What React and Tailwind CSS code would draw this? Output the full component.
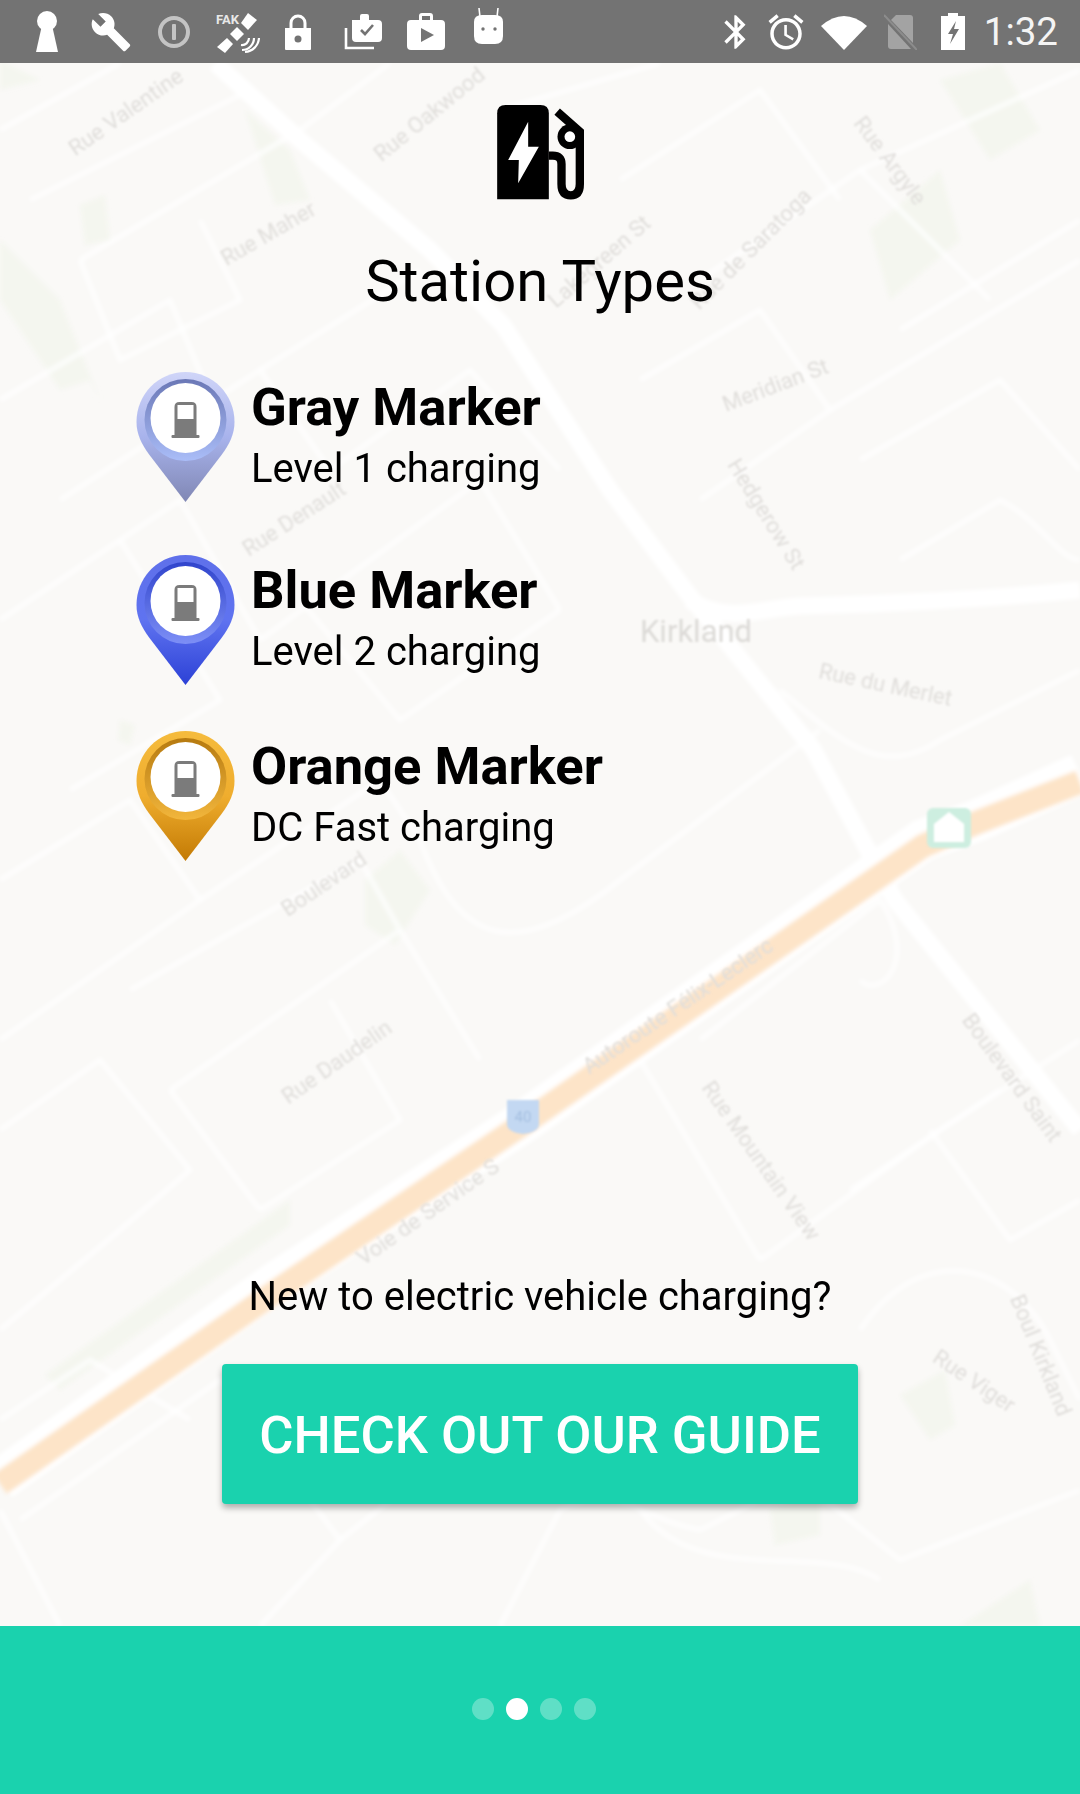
import React from 'react';

const roads = [
  'M215 63 L300 140 L430 250 L503 325 L610 490 L689 595 L813 749 L895 900 L1080 1130',
  'M689 600 C730 625 760 608 800 606 C880 604 980 600 1080 590',
];

const streets = [
  'M0 130 L120 63', 'M30 200 L250 90 L330 170', 'M80 260 L300 130 L390 63', 'M80 260 L120 360 L240 300 L200 220',
  'M0 400 L170 300 L220 420', 'M60 500 L260 370 L330 470', 'M260 370 L420 270', 'M0 620 L180 500 L260 640',
  'M120 540 L220 700 L70 790', 'M260 640 L480 480 L560 610', 'M330 470 L470 370 L560 470', 'M560 610 L400 720 L300 600',
  'M500 110 L660 63', 'M620 180 L760 90 L840 200', 'M700 280 L860 170 L990 300', 'M640 380 L760 310 L830 410 L700 500',
  'M860 170 L1080 70', 'M900 330 L1080 220', 'M830 410 L1080 260', 'M860 460 L1000 380 L1080 470', 'M900 560 L1000 500 C1040 520 1060 560 1080 560',
  'M780 690 C840 740 880 780 940 740 L1080 670', 'M0 880 L130 800 L200 900 L0 1040', 'M200 900 L380 780 L420 840', 'M130 990 L360 860 L400 930 L170 1090',
  'M0 1130 L100 1060 L190 1170 L120 1230 L0 1330', 'M170 1090 L260 1210', 'M260 1210 L400 1120 L330 1000',
  'M420 840 C460 950 520 960 620 880 L820 730', 'M400 930 L480 1060', 'M640 1060 L760 1260', 'M700 1040 L880 900 C920 960 880 1000 860 980',
  'M760 1260 L940 1130 L1080 1040', 'M850 1190 L1000 1090', 'M930 1130 L1010 1240 L1080 1200', 'M860 1330 C920 1240 1010 1260 1050 1340 L1080 1400',
  'M0 1510 L60 1626', 'M20 1520 L220 1380 L340 1540 L260 1626', 'M340 1540 L480 1430', 'M500 1626 L560 1510 C620 1480 640 1520 700 1530 L800 1480',
  'M800 1480 L900 1560 L1080 1490', 'M640 1510 C700 1590 820 1540 880 1580', 'M0 1420 L90 1360 L190 1420',
];

const greens = [
  'M0 240 L60 300 L100 400 L90 380 L60 390 L0 300 Z',
  'M0 60 L0 90 L40 80 Z',
  'M80 205 L105 195 L110 240 L85 245 Z',
  'M245 110 L290 150 L310 200 L275 205 Z',
  'M870 230 L940 170 L960 240 L890 300 Z',
  'M940 80 L1000 63 L1040 130 L990 160 Z',
  'M365 880 L400 850 L430 890 L395 945 L365 925 Z',
  'M45 1375 L290 1200 L290 1225 L60 1390 Z',
  'M770 1510 L820 1490 L820 1535 L775 1545 Z',
  'M900 1395 L945 1370 L955 1425 L930 1440 Z',
  'M960 1626 L1030 1580 L1040 1626 Z',
  'M120 720 L135 725 L130 745 L118 740 Z',
];

const labels = [
  ['Rue Valentine', 130, 118, -35, 22],
  ['Rue Oakwood', 434, 120, -39, 22],
  ['Rue Maher', 272, 240, -30, 22],
  ['Rue Argyle', 884, 165, 53, 22],
  ['Rue de Saratoga', 756, 254, -45, 22],
  ['Lakegreen St', 604, 267, -41, 22],
  ['Meridian St', 778, 392, -21, 22],
  ['Hedgerow St', 760, 518, 58, 22],
  ['Rue Denault', 298, 525, -33, 22],
  ['Rue du Merlet', 884, 692, 12, 22],
  ['Boulevard', 328, 890, -34, 22],
  ['Rue Daudelin', 341, 1068, -35, 22],
  ['Autoroute Félix-Leclerc', 682, 1012, -34, 22],
  ['Voie de Service S', 432, 1218, -35, 22],
  ['Rue Mountain View', 755, 1165, 55, 22],
  ['Boulevard Saint', 1006, 1082, 54, 22],
  ['Rue Viger', 970, 1387, 34, 22],
  ['Boul Kirkland', 1034, 1358, 68, 22],
];

const MapBackground = () => (
  <svg className="absolute inset-0 w-full h-full" viewBox="0 63 1080 1563" preserveAspectRatio="none">
    <defs>
      <filter id="mapBlur"><feGaussianBlur stdDeviation="2.2" /></filter>
      <filter id="labelBlur"><feGaussianBlur stdDeviation="1.3" /></filter>
    </defs>
    <g filter="url(#mapBlur)">
      {greens.map((d) => <path key={d} d={d} fill="#f4f6ef" />)}
      {streets.map((d) => <path key={d} d={d} fill="none" stroke="#ffffff" strokeWidth="5" opacity="0.75" />)}
      {roads.map((d) => <path key={d} d={d} fill="none" stroke="#ffffff" strokeWidth="17" />)}
      <path d="M1080 774 L978 820 L923 840 L523 1122 L275 1283 L0 1480" fill="none" stroke="#ffffff" strokeWidth="42" />
      <path d="M1080 782 L978 822 L923 846 L523 1124 L275 1292 L0 1484" fill="none" stroke="#fde4c8" strokeWidth="24" />
    </g>
    <g filter="url(#labelBlur)">
      {labels.map(([t, x, y, r, s]) => (
        <text key={t} x={x} y={y} transform={`rotate(${r} ${x} ${y})`} textAnchor="middle" fontSize={s} fontFamily="Roboto, sans-serif" fill="#e0dedb">{t}</text>
      ))}
      <text x="696" y="642" textAnchor="middle" fontSize="31" fontFamily="Roboto, sans-serif" fill="#dcdad7">Kirkland</text>
      <path d="M507 1100 H539 V1124 Q539 1132 523 1134 Q507 1132 507 1124 Z" fill="#c3d8f2" />
      <text x="523" y="1122" textAnchor="middle" fontSize="15" fontFamily="Roboto, sans-serif" fill="#a4bfe0">40</text>
      <rect x="927" y="808" width="44" height="40" rx="6" fill="#cdeee0" />
      <path d="M949 812 L964 824 V842 H934 V824 Z" fill="#ffffff" />
    </g>
  </svg>
);

const markerColors = {
  gray: { top: '#d0d5f8', mid: '#a8b3ec', tip: '#8087b4', ringTop: '#6b78b6', ringBottom: '#aabdf8' },
  blue: { top: '#5f70ea', mid: '#5f73f0', tip: '#2c41d6', ringTop: '#3044cc', ringBottom: '#7d8ff6' },
  orange: { top: '#f5bb3d', mid: '#efad2e', tip: '#c37a04', ringTop: '#b67a10', ringBottom: '#f2b63c' },
};

const Marker = ({ type }) => {
  const c = markerColors[type];
  return (
    <svg className="w-[99px] h-[130px] shrink-0" viewBox="0 0 98 130">
      <defs>
        <linearGradient id={`outer-${type}`} x1="0" y1="0" x2="0" y2="1">
          <stop offset="0" stopColor={c.top} />
          <stop offset="0.5" stopColor={c.mid} />
          <stop offset="1" stopColor={c.tip} />
        </linearGradient>
        <linearGradient id={`ring-${type}`} x1="0" y1="0" x2="0" y2="1">
          <stop offset="0" stopColor={c.ringTop} />
          <stop offset="1" stopColor={c.ringBottom} />
        </linearGradient>
      </defs>
      <path d="M49 0 C76 0 98 22 98 50 C98 62 93 72 85 83 L49 130 L13 83 C5 72 0 62 0 50 C0 22 22 0 49 0 Z" fill={`url(#outer-${type})`} />
      <circle cx="49" cy="48" r="41" fill={`url(#ring-${type})`} />
      <circle cx="49" cy="46" r="35" fill="#ffffff" />
      <path d="M38 35 Q38 30 43 30 H55 Q60 30 60 35 V64 H38 Z" fill="#7b7b7b" />
      <rect x="41" y="33" width="16" height="14" fill="#ffffff" />
      <rect x="35" y="63" width="28" height="3" rx="1" fill="#7b7b7b" />
    </svg>
  );
};

const StatusBar = () => (
  <div className="h-[63px] bg-[#737373] flex items-center shrink-0 relative text-white">
    <svg className="w-[22px] h-[41px] ml-[36px]" viewBox="0 0 22 41" fill="#fff"><circle cx="11" cy="10" r="10" /><path d="M6 14 H16 L22 41 H0 Z" /></svg>
    <svg className="w-[42px] h-[42px] ml-[32px]" viewBox="0 0 24 24" fill="#fff"><path d="M22.7 19l-9.1-9.1c.9-2.3.4-5-1.5-6.9-2-2-5-2.4-7.4-1.3L9 6 6 9 1.6 4.7C.4 7.1.9 10.1 2.9 12.1c1.9 1.9 4.6 2.4 6.9 1.5l9.1 9.1c.4.4 1 .4 1.4 0l2.3-2.3c.5-.4.5-1.1.1-1.4z" /></svg>
    <svg className="w-[32px] h-[32px] ml-[26px]" viewBox="0 0 32 32" fill="none"><circle cx="16" cy="16" r="14" stroke="#c4c4c4" strokeWidth="4" /><rect x="14" y="8" width="4" height="16" rx="1" fill="#c4c4c4" /></svg>
    <svg className="w-[46px] h-[44px] ml-[24px]" viewBox="0 0 46 44" fill="#fff">
      <text x="2" y="14" fontSize="13" fontWeight="700" fontFamily="Roboto, sans-serif" fill="#e8e8e8">FAK</text>
      <path d="M34 3 L43 10 L34 20 L27 13 Z" />
      <path d="M23 17 L30 24 L23 31 L16 24 Z" />
      <path d="M13 28 L19 34 L11 43 L3 37 Z" />
      <path d="M28 40 A 12 12 0 0 0 40 28 M31 42 A 15 15 0 0 0 45 28 M27 35 A 7 7 0 0 0 35 28" fill="none" stroke="#fff" strokeWidth="2.2" />
    </svg>
    <svg className="w-[26px] h-[36px] ml-[25px]" viewBox="0 0 26 36" fill="#fff"><path d="M6 15 V9 A7 7 0 0 1 20 9 V15" fill="none" stroke="#fff" strokeWidth="3" /><path d="M0 14 H26 V35 Q26 36 25 36 H1 Q0 36 0 35 Z" /><circle cx="13" cy="25" r="3.5" fill="#737373" /></svg>
    <svg className="w-[38px] h-[36px] ml-[33px]" viewBox="0 0 38 36" fill="#fff">
      <path d="M2 14 V34 H30" fill="none" stroke="#fff" strokeWidth="2.6" />
      <path d="M8 6 H16 V2 Q16 0 18 0 H23 Q25 0 25 2 V6 H34 Q38 6 38 10 V24 Q38 28 34 28 H12 Q8 28 8 24 Z" />
      <path d="M17 16 L21 20 L29 11" fill="none" stroke="#737373" strokeWidth="2.6" />
    </svg>
    <svg className="w-[38px] h-[37px] ml-[25px]" viewBox="0 0 38 37" fill="#fff">
      <path d="M4 7 H12 V3 Q12 0 15 0 H23 Q26 0 26 3 V7 H34 Q38 7 38 11 V33 Q38 37 34 37 H4 Q0 37 0 33 V11 Q0 7 4 7 Z M15 3 V7 H23 V3 Z" fillRule="evenodd" />
      <path d="M14 15 L27 22 L14 29 Z" fill="#737373" />
    </svg>
    <svg className="w-[29px] h-[37px] ml-[29px] -mt-[12px]" viewBox="0 0 29 37" fill="#fff">
      <path d="M6 10 L5 1 M23 10 L24 1" stroke="#fff" strokeWidth="1.6" />
      <path d="M8 8 H21 Q29 8 29 15 V29 Q29 37 21 37 H8 Q0 37 0 29 V15 Q0 8 8 8 Z" />
      <circle cx="9" cy="22" r="1.7" fill="#737373" /><circle cx="21" cy="22" r="1.7" fill="#737373" />
    </svg>

    <div className="ml-auto flex items-center">
      <svg className="w-[40px] h-[40px]" viewBox="0 0 24 24" fill="#fff"><path d="M17.71 7.71L12 2h-1v7.59L6.41 5 5 6.41 10.59 12 5 17.59 6.41 19 11 14.41V22h1l5.71-5.71-4.3-4.29 4.3-4.29zM13 5.83l1.88 1.88L13 9.59V5.83zm1.88 10.46L13 18.17v-3.76l1.88 1.88z" /></svg>
      <svg className="w-[42px] h-[42px] ml-[9px]" viewBox="0 0 24 24" fill="#fff"><path d="M22 5.72l-4.6-3.86-1.29 1.53 4.6 3.86L22 5.72zM7.88 3.39L6.6 1.86 2 5.71l1.29 1.53 4.59-3.85zM12.5 8H11v6l4.75 2.85.75-1.23-4-2.37V8zM12 4c-4.97 0-9 4.03-9 9s4.03 9 9 9 9-4.03 9-9-4.03-9-9-9zm0 16c-3.87 0-7-3.13-7-7s3.13-7 7-7 7 3.13 7 7-3.13 7-7 7z" /></svg>
      <svg className="w-[46px] h-[36px] ml-[14px]" viewBox="0 0 46 36" fill="#fff"><path d="M0 12 Q23 -8 46 12 L23 36 Z" /></svg>
      <svg className="w-[33px] h-[36px] ml-[17px]" viewBox="0 0 33 36" fill="#a3a3a3"><path d="M12 1 H26 Q29 1 29 4 V29 L7 6 Z" /><path d="M4 10 L27 35 H7 Q4 35 4 32 Z" /><path d="M0 1 L33 36" stroke="#8c8c8c" strokeWidth="2" /></svg>
      <svg className="w-[24px] h-[37px] ml-[24px]" viewBox="0 0 24 37" fill="#fff"><path d="M7 0 H17 V3 H24 V37 H0 V3 H7 Z" /><path d="M15 8 L7 21 H12 L9 31 L18 16 H13 Z" fill="#737373" /></svg>
      <span className="ml-[19px] mr-[22px] text-[38.5px] leading-[63px] font-[Roboto] text-[#f4f4f4]">1:32</span>
    </div>
  </div>
);

const EvStationIcon = () => (
  <svg className="w-[87px] h-[95px]" viewBox="85 45 260 285">
    <path d="M110 45 H215 Q240 45 240 70 V328 H85 V70 Q85 45 110 45 Z" fill="#000" />
    <path d="M178 95 L118 210 H150 L148 280 L210 170 H178 Z" fill="#fff" />
    <path d="M240 197 H252 Q278 197 278 222 V282 Q278 316 306 316 Q333 316 333 282 V125 L265 65" fill="none" stroke="#000" strokeWidth="25" />
    <circle cx="303" cy="140" r="37" fill="#000" />
    <circle cx="303" cy="140" r="16" fill="#fff" />
  </svg>
);

const MarkerRow = ({ type, title, subtitle, className }) => (
  <div className={`flex items-start ${className}`}>
    <Marker type={type} />
    <div className="ml-[16px] pt-[5px] text-black">
      <div className="text-[52.5px] leading-[60px] font-bold">{title}</div>
      <div className="text-[40px] leading-[50px] mt-[7px]">{subtitle}</div>
    </div>
  </div>
);

export default function App() {
  return (
    <div className="w-[1080px] h-[1794px] flex flex-col overflow-hidden font-[Roboto]">
      <StatusBar />

      <div className="relative flex-1 bg-[#faf9f7] flex flex-col">
        <MapBackground />

        <div className="relative flex flex-col flex-1">
          <div className="flex justify-center pt-[42px]">
            <EvStationIcon />
          </div>
          <h1 className="mt-[48px] text-center text-[58px] leading-[66px] font-normal text-black">Station Types</h1>

          <div className="mt-[58px] pl-[136px]">
            <MarkerRow type="gray" title="Gray Marker" subtitle="Level 1 charging" />
            <MarkerRow type="blue" title="Blue Marker" subtitle="Level 2 charging" className="mt-[53px]" />
            <MarkerRow type="orange" title="Orange Marker" subtitle="DC Fast charging" className="mt-[46px]" />
          </div>

          <div className="mt-auto mb-[122px] flex flex-col items-center">
            <p className="text-[40px] leading-[50px] text-black">New to electric vehicle charging?</p>
            <button className="mt-[42px] w-[636px] h-[140px] pt-[2px] rounded-[4px] bg-[#1ad2ae] text-white text-[52.5px] font-medium shadow-[0_4px_6px_rgba(0,0,0,0.3)]">
              CHECK OUT OUR GUIDE
            </button>
          </div>
        </div>
      </div>

      <div className="h-[168px] shrink-0 bg-[#1ad2ae] flex items-center justify-center gap-[12px] pb-[2px] pr-[12px]">
        <span className="w-[22px] h-[22px] rounded-full bg-white/30" />
        <span className="w-[22px] h-[22px] rounded-full bg-white" />
        <span className="w-[22px] h-[22px] rounded-full bg-white/30" />
        <span className="w-[22px] h-[22px] rounded-full bg-white/30" />
      </div>
    </div>
  );
}
